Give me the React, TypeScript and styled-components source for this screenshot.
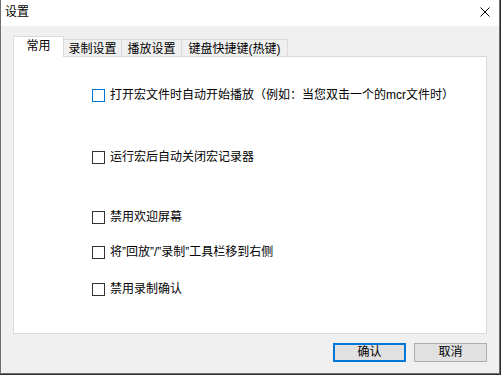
import React, { FC, useState } from "react";
import styled, { createGlobalStyle } from "styled-components";

const GlobalStyle = createGlobalStyle`
  html, body {
    margin: 0;
    padding: 0;
    background: #2b2b2b;
  }
  body {
    width: 501px;
    height: 375px;
    overflow: hidden;
    font-family: "Liberation Sans", "Noto Sans CJK SC", sans-serif;
    font-size: 12px;
    color: #000;
  }
`;

const Window = styled.div`
  width: 500px;
  height: 374px;
  box-sizing: border-box;
  background: #f0f0f0;
  border: 1px solid #6f6f6f;
  border-top: none;
  display: flex;
  flex-direction: column;
`;

const TitleBar = styled.div`
  height: 26px;
  background: #fff;
  display: flex;
  align-items: center;
  justify-content: space-between;
  padding: 0 9px 0 4px;
  line-height: 12px;
  flex-shrink: 0;
`;

const TitleText = styled.span`
  font-size: 12px;
  margin-top: -2px;
`;

const CloseIcon = styled.svg`
  width: 10px;
  height: 10px;
  margin-top: -2px;
`;

const Body = styled.div`
  flex: 1;
  display: flex;
  flex-direction: column;
  padding: 10px 12px 11px 12px;
`;

const TabStrip = styled.div`
  display: flex;
  align-items: flex-end;
  height: 21px;
  position: relative;
  z-index: 1;
  margin-bottom: -1px;
`;

const Tab = styled.div<{ $active?: boolean; $width: number }>`
  box-sizing: border-box;
  width: ${(p) => p.$width}px;
  height: ${(p) => (p.$active ? "21px" : "18px")};
  padding-top: 3px;
  text-align: center;
  background: ${(p) => (p.$active ? "#fff" : "#f0f0f0")};
  border: 1px solid #d9d9d9;
  border-bottom: ${(p) => (p.$active ? "none" : "1px solid #d9d9d9")};
  border-left: ${(p) => (p.$active ? "1px solid #d9d9d9" : "none")};
  line-height: 13px;
  white-space: nowrap;
`;

const Panel = styled.div`
  box-sizing: border-box;
  height: 278px;
  background: #fff;
  border: 1px solid #d9d9d9;
  display: flex;
  flex-direction: column;
  padding: 32px 0 0 78px;
`;

const OptionRow = styled.label<{ $gap: number }>`
  display: flex;
  align-items: center;
  gap: 5px;
  height: 13px;
  margin-top: ${(p) => p.$gap}px;
  line-height: 13px;
  white-space: nowrap;
`;

const Box = styled.span<{ $focus?: boolean }>`
  box-sizing: border-box;
  width: 13px;
  height: 13px;
  flex-shrink: 0;
  background: #fff;
  border: 1px solid ${(p) => (p.$focus ? "#0078d7" : "#333")};
`;

const ButtonRow = styled.div`
  display: flex;
  justify-content: flex-end;
  gap: 8px;
  margin-top: 9px;
`;

const Button = styled.button<{ $primary?: boolean }>`
  box-sizing: border-box;
  width: 73px;
  height: 19px;
  padding: 0;
  background: #e1e1e1;
  border: ${(p) => (p.$primary ? "2px solid #0078d7" : "1px solid #adadad")};
  font-family: inherit;
  font-size: 12px;
  line-height: 13px;
  color: #000;
`;

const tabs = [
  { label: "常用", width: 51 },
  { label: "录制设置", width: 58 },
  { label: "播放设置", width: 60 },
  { label: "键盘快捷键(热键)", width: 106 },
];

const options = [
  { text: "打开宏文件时自动开始播放（例如：当您双击一个的mcr文件时）", gap: 0, focus: true },
  { text: "运行宏后自动关闭宏记录器", gap: 49 },
  { text: "禁用欢迎屏幕", gap: 47 },
  { text: "将\u201d回放\u201d/\u201d录制\u201d工具栏移到右侧", gap: 22 },
  { text: "禁用录制确认", gap: 24 },
];

const App: FC = () => {
  const [active] = useState(0);
  return (
    <>
      <GlobalStyle />
      <Window>
        <TitleBar>
          <TitleText>设置</TitleText>
          <CloseIcon viewBox="0 0 10 10">
            <path d="M0.5 0.5 L9.5 9.5 M9.5 0.5 L0.5 9.5" stroke="#000" strokeWidth="1" fill="none" />
          </CloseIcon>
        </TitleBar>
        <Body>
          <TabStrip>
            {tabs.map((t, i) => (
              <Tab key={t.label} $active={i === active} $width={t.width}>
                {t.label}
              </Tab>
            ))}
          </TabStrip>
          <Panel>
            {options.map((o) => (
              <OptionRow key={o.text} $gap={o.gap}>
                <Box $focus={o.focus} />
                <span>{o.text}</span>
              </OptionRow>
            ))}
          </Panel>
          <ButtonRow>
            <Button $primary>确认</Button>
            <Button>取消</Button>
          </ButtonRow>
        </Body>
      </Window>
    </>
  );
};

export default App;
